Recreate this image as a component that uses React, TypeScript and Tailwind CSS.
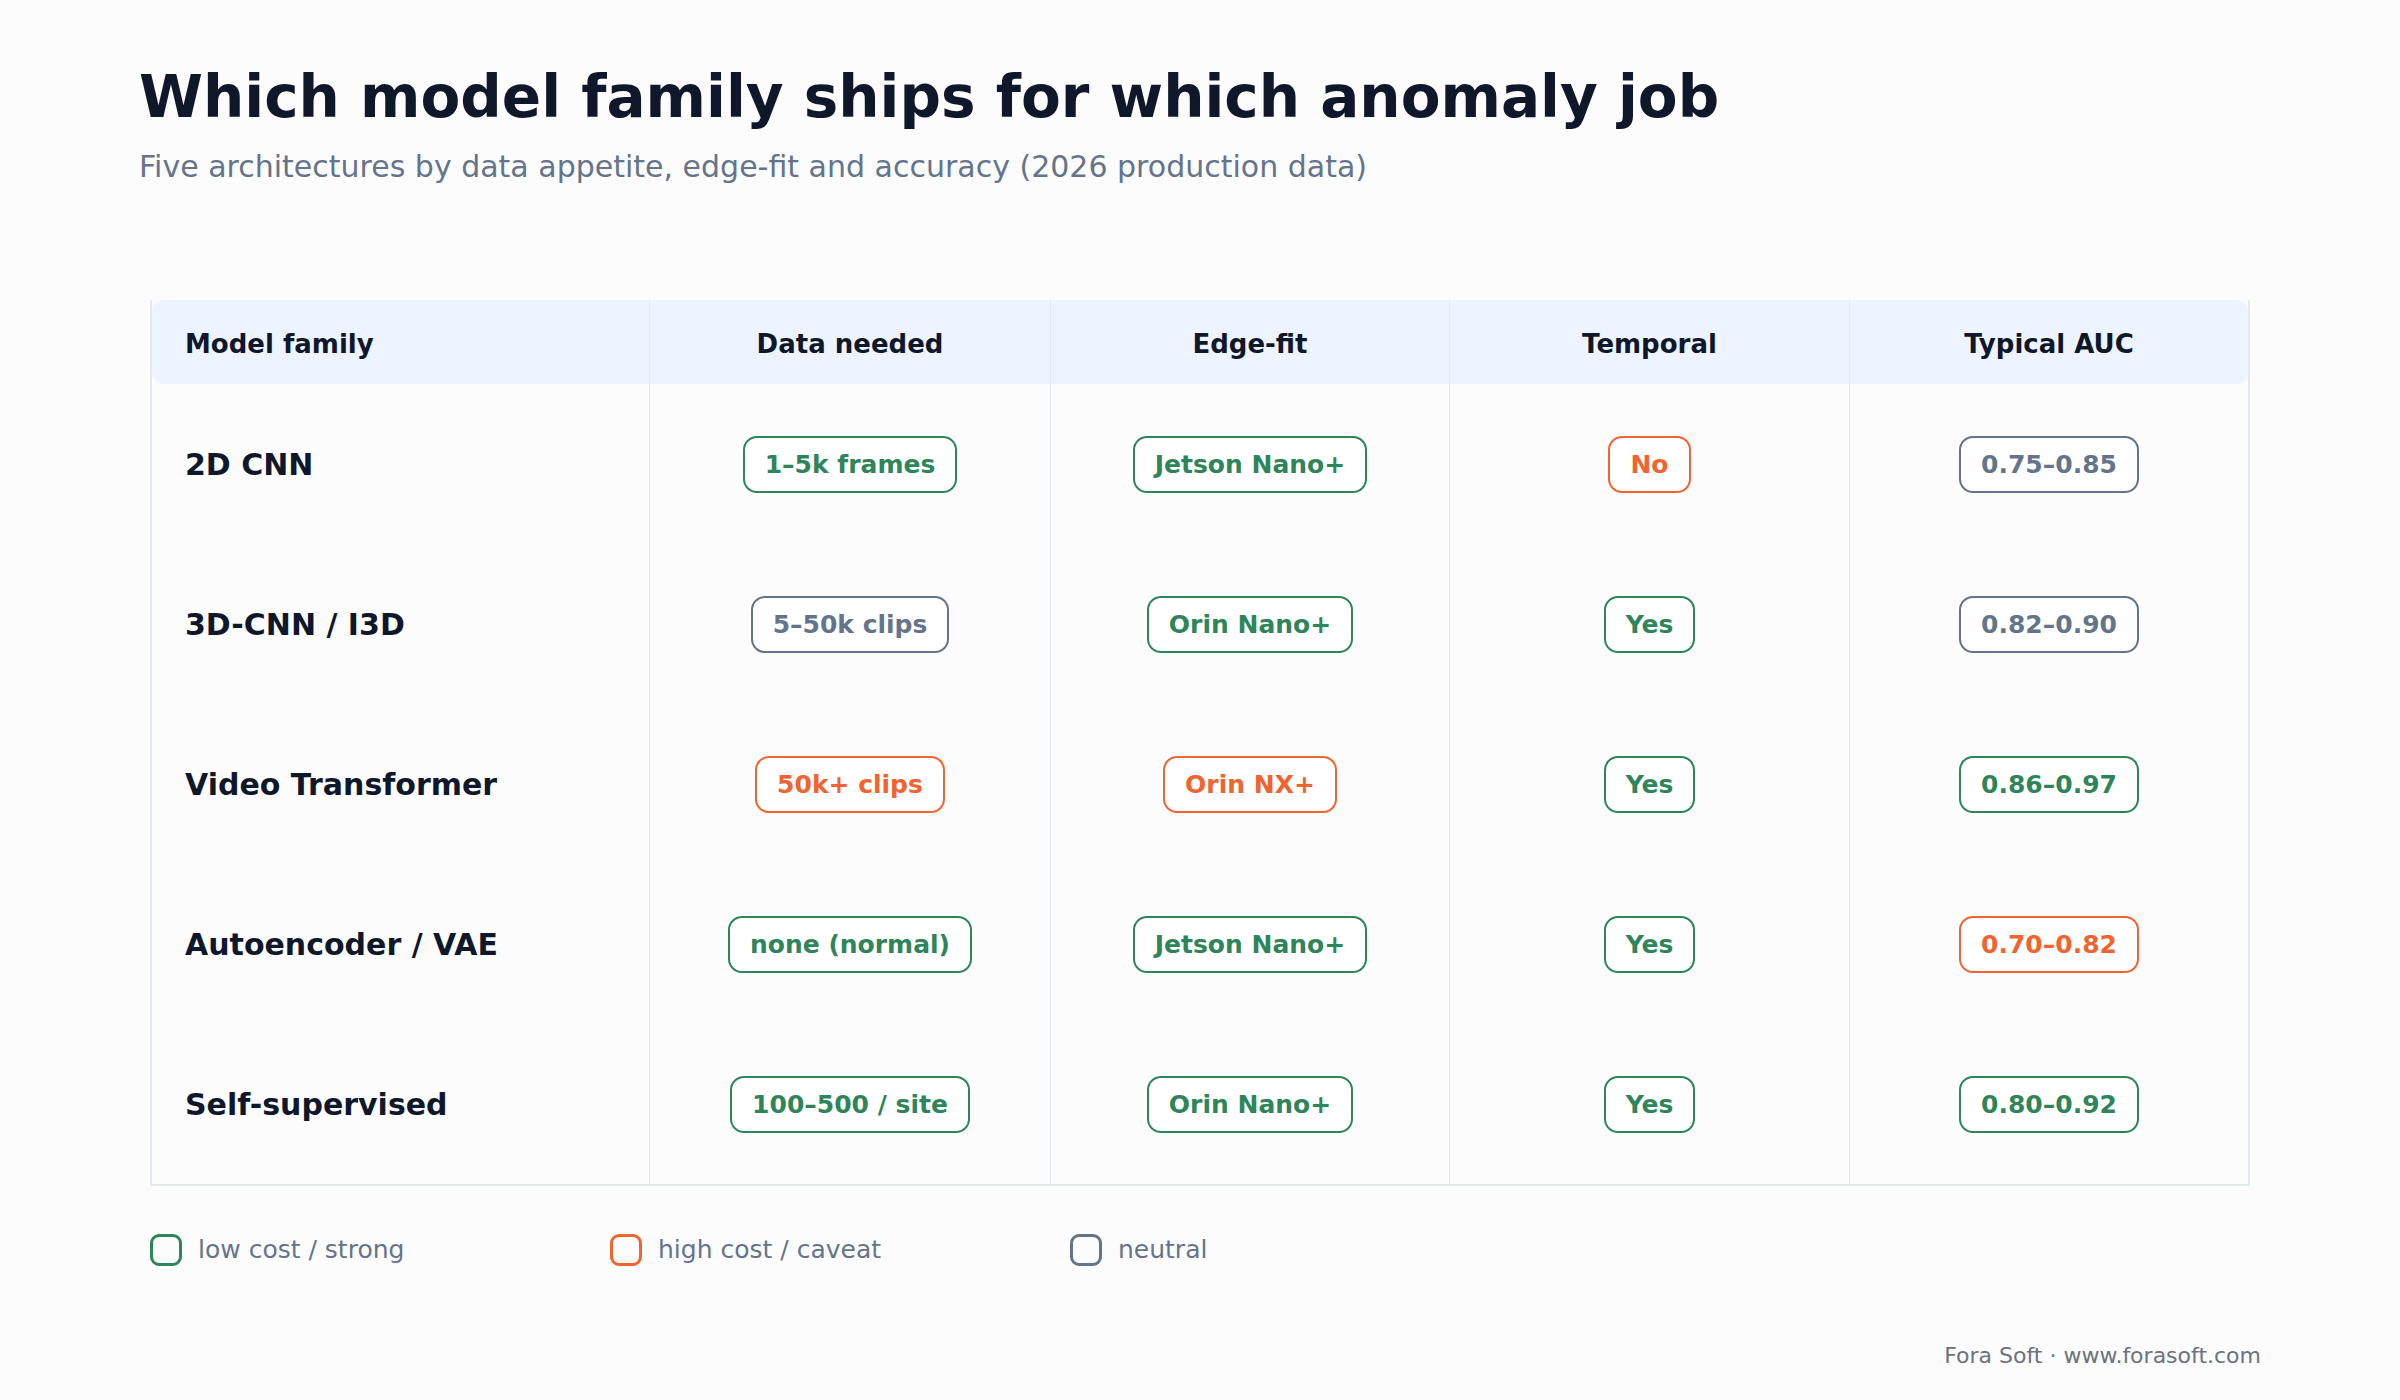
type Tone = 'good' | 'bad' | 'neutral';

const tone: Record<Tone, string> = {
  good: 'border-[#2F855A] text-[#2F855A]',
  bad: 'border-[#F0642F] text-[#F0642F]',
  neutral: 'border-[#64748B] text-[#64748B]',
};

const cols = 'grid grid-cols-[497px_401px_399px_400px_1fr]';

const rows: { name: string; cells: [string, Tone][] }[] = [
  {
    name: '2D CNN',
    cells: [
      ['1–5k frames', 'good'],
      ['Jetson Nano+', 'good'],
      ['No', 'bad'],
      ['0.75–0.85', 'neutral'],
    ],
  },
  {
    name: '3D-CNN / I3D',
    cells: [
      ['5–50k clips', 'neutral'],
      ['Orin Nano+', 'good'],
      ['Yes', 'good'],
      ['0.82–0.90', 'neutral'],
    ],
  },
  {
    name: 'Video Transformer',
    cells: [
      ['50k+ clips', 'bad'],
      ['Orin NX+', 'bad'],
      ['Yes', 'good'],
      ['0.86–0.97', 'good'],
    ],
  },
  {
    name: 'Autoencoder / VAE',
    cells: [
      ['none (normal)', 'good'],
      ['Jetson Nano+', 'good'],
      ['Yes', 'good'],
      ['0.70–0.82', 'bad'],
    ],
  },
  {
    name: 'Self-supervised',
    cells: [
      ['100–500 / site', 'good'],
      ['Orin Nano+', 'good'],
      ['Yes', 'good'],
      ['0.80–0.92', 'good'],
    ],
  },
];

const headers = ['Data needed', 'Edge-fit', 'Temporal', 'Typical AUC'];

function Pill({ label, t }: { label: string; t: Tone }) {
  return (
    <span
      className={`inline-flex h-[57px] items-center rounded-[14px] border-2 bg-white px-[20px] text-[25px] font-bold leading-none ${tone[t]}`}
    >
      {label}
    </span>
  );
}

function Legend({ label, t }: { label: string; t: Tone }) {
  return (
    <div className="flex w-[460px] items-center gap-[16px]">
      <span className={`h-[32px] w-[32px] rounded-[9px] border-[3px] ${tone[t]}`} />
      <span className="text-[25px] text-[#64748B]">{label}</span>
    </div>
  );
}

export default function App() {
  return (
    <div
      className="flex h-[1400px] w-[2400px] flex-col bg-[#FCFCFD]"
      style={{ fontFamily: '"DejaVu Sans", "Liberation Sans", sans-serif' }}
    >
      {/* Title */}
      <div className="pl-[139px] pt-[68px]">
        <h1 className="text-[58px] font-bold leading-none text-[#0F172A]">
          Which model family ships for which anomaly job
        </h1>
        <p className="mt-[26px] text-[30px] leading-none text-[#64748B]">
          Five architectures by data appetite, edge-fit and accuracy (2026 production data)
        </p>
      </div>

      {/* Table */}
      <div className="mx-[150px] mt-[118px] border-x-2 border-b-2 border-[#E2E8F0]">
        <div className={`${cols} h-[84px] rounded-[12px] bg-[#EEF4FF] text-[26px] font-bold text-[#0F172A]`}>
          <div className="flex items-center pl-[33px] pt-[4px]">Model family</div>
          {headers.map((h) => (
            <div key={h} className="flex items-center justify-center border-l-[1.5px] border-[#E2E8F0] pt-[4px]">
              {h}
            </div>
          ))}
        </div>
        {rows.map((r) => (
          <div key={r.name} className={`${cols} h-[160px]`}>
            <div className="flex items-center pl-[33px] text-[30px] font-bold text-[#0F172A]">{r.name}</div>
            {r.cells.map(([label, t], i) => (
              <div key={i} className="flex items-center justify-center border-l-[1.5px] border-[#E2E8F0]">
                <Pill label={label} t={t} />
              </div>
            ))}
          </div>
        ))}
      </div>

      {/* Legend */}
      <div className="ml-[150px] mt-[45px] flex">
        <Legend label="low cost / strong" t="good" />
        <Legend label="high cost / caveat" t="bad" />
        <Legend label="neutral" t="neutral" />
      </div>

      {/* Footer */}
      <div className="mt-auto flex justify-end pb-[28px] pr-[139px]">
        <span className="text-[22px] text-[#6B7280]">Fora Soft · www.forasoft.com</span>
      </div>
    </div>
  );
}
